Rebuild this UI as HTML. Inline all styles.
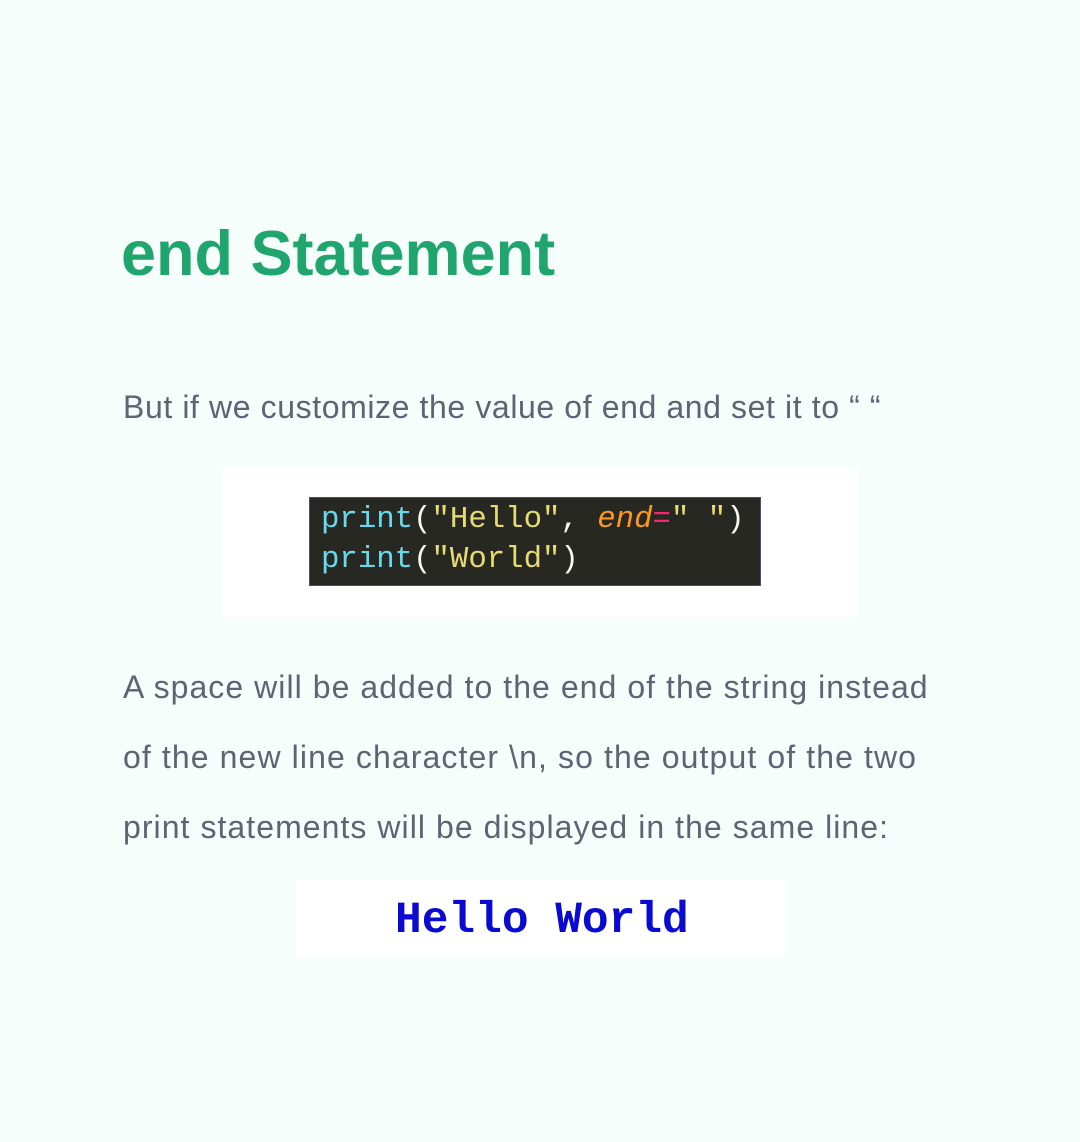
<!DOCTYPE html>
<html><head><style>
html,body{margin:0;padding:0}
body{width:1080px;height:1142px;background:#f5fefb;position:relative;overflow:hidden;font-family:"Liberation Sans",sans-serif}
.t{position:absolute;left:123px;color:#5d6473;font-size:32px;white-space:nowrap;letter-spacing:0.9px}
h1{position:absolute;left:121px;top:218px;margin:0;font-size:63px;font-weight:bold;color:#1fa56d;letter-spacing:0;white-space:nowrap}
.panel{position:absolute;background:#fff}
.code{position:absolute;left:309px;top:497px;width:452px;height:89px;background:#272822;border:1px solid #4b4b8c;font-family:"Liberation Mono",monospace;font-size:30.7px;line-height:40px;padding:0;box-sizing:border-box}
.code div{position:absolute;left:11px;white-space:pre}
.f{color:#66d9ef}.s{color:#e6db74}.w{color:#f8f8f2}.o{color:#fd971f;font-style:italic}.p{color:#f92672}
</style></head><body>
<h1>end Statement</h1>
<div class="t" style="top:389px;letter-spacing:0.6px">But if we customize the value of end and set it to “ “</div>
<div class="panel" style="left:222px;top:467px;width:636px;height:150px"></div>
<div class="code">
<div style="top:2px"><span class="f">print</span><span class="w">(</span><span class="s">"Hello"</span><span class="w">, </span><span class="o">end</span><span class="p">=</span><span class="s">" "</span><span class="w">)</span></div>
<div style="top:42px"><span class="f">print</span><span class="w">(</span><span class="s">"World"</span><span class="w">)</span></div>
</div>
<div class="t" style="top:669px;letter-spacing:1.05px">A space will be added to the end of the string instead</div>
<div class="t" style="top:739px;letter-spacing:1.1px">of the new line character \n, so the output of the two</div>
<div class="t" style="top:809px;letter-spacing:1.05px">print statements will be displayed in the same line:</div>
<div class="panel" style="left:295px;top:880px;width:490px;height:78px"></div>
<div style="position:absolute;left:395px;top:896px;font-family:'Liberation Mono',monospace;font-weight:bold;font-size:44.5px;color:#0a0ad0;white-space:pre">Hello World</div>
</body></html>
